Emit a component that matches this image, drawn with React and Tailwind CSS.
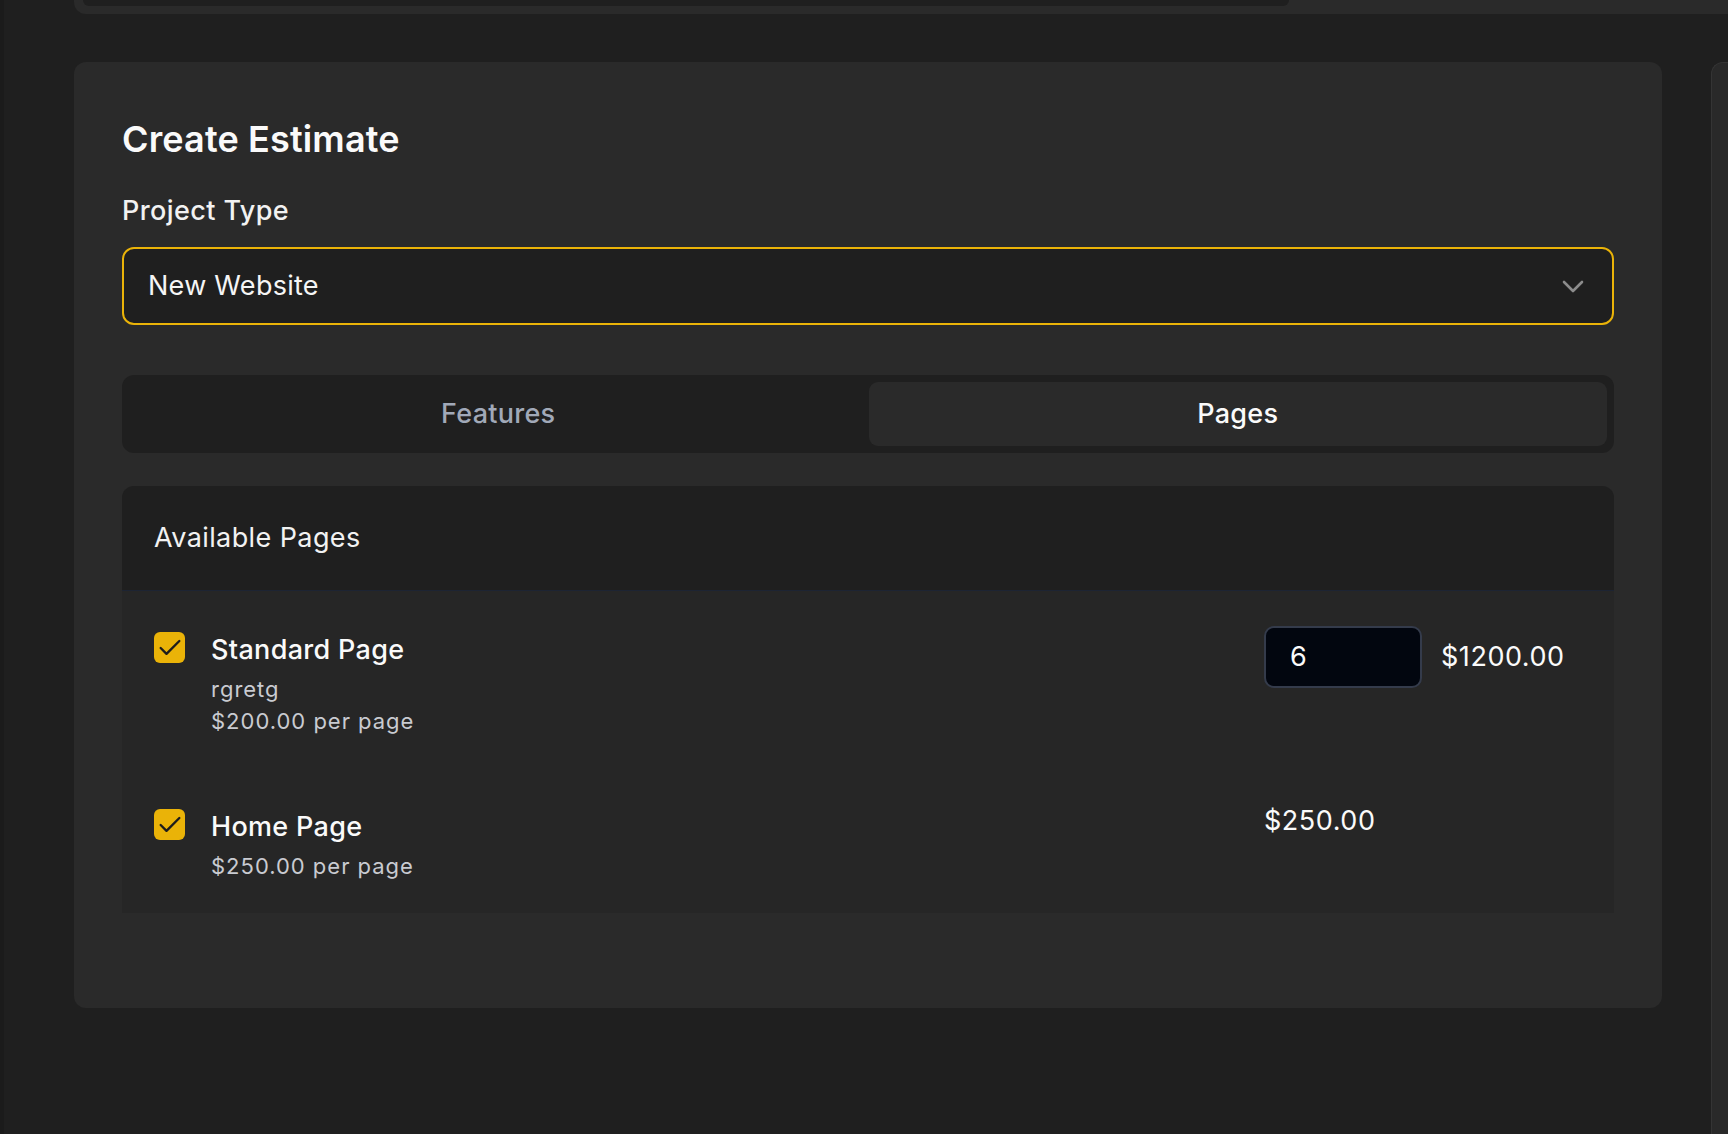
import React from "react";

function Check() {
  return (
    <svg width="28" height="28" viewBox="0 0 24 24" fill="none" stroke="#1c1c1c" strokeWidth="2" strokeLinecap="round" strokeLinejoin="round">
      <path d="M20 6 9 17l-5-5" />
    </svg>
  );
}

function Checkbox() {
  return (
    <div className="w-[31px] h-[31px] shrink-0 rounded-[6px] bg-[#eab308] flex items-center justify-center">
      <Check />
    </div>
  );
}

function Row({ title, lines, right }) {
  return (
    <div className="flex items-start justify-between pl-[32px] pt-[35px] pb-[31px]">
      <div className="flex items-start gap-[26px] mt-[6px]">
        <Checkbox />
        <div className="flex flex-col">
          <div className="text-[27px] leading-[36px] font-medium tracking-[0.012em] text-[#fafafa] mb-[5px]">{title}</div>
          {lines.map((l) => (
            <div key={l} className="text-[22px] leading-[32px] tracking-[0.045em] text-[#c9cbd1]">{l}</div>
          ))}
        </div>
      </div>
      <div className="w-[318px] mr-[32px] flex items-center gap-[19px]">{right}</div>
    </div>
  );
}

export default function App() {
  return (
    <div className="w-[1728px] h-[1134px] overflow-hidden bg-[#1f1f1f] flex" style={{ fontFamily: "Inter, 'Noto Sans', sans-serif" }}>
      <div className="w-[4px] h-full shrink-0 bg-[#1b1b1b]" />
      <div className="flex-1 flex flex-col pl-[70px]">
        <div className="h-[14px] shrink-0 bg-[#2a2a2a] rounded-bl-xl">
          <div className="ml-[9px] w-[1206px] h-[6px] bg-[#1f1f1f] rounded-b-lg" />
        </div>
        <div className="mt-[48px] flex items-start">
          <div className="w-[1588px] shrink-0 bg-[#2a2a2a] rounded-xl px-[48px] pt-[53px] pb-[95px]">
            <h1 className="text-[36px] leading-[48px] font-semibold text-[#fafafa] tracking-[0.004em]">Create Estimate</h1>
            <div className="mt-[28px] text-[27px] leading-[40px] font-medium tracking-[0.015em] text-[#f2f2f2]">Project Type</div>
            <div className="mt-[16px] h-[78px] rounded-[12px] border-2 border-[#eab308] bg-[#1f1f1f] flex items-center justify-between pl-[24px] pr-[28px]">
              <span className="text-[27px] leading-[36px] tracking-[0.01em] text-[#f5f5f5]">New Website</span>
              <svg width="22" height="13" viewBox="0 0 22 13" fill="none" stroke="#8c8c8c" strokeWidth="2.6" strokeLinecap="round" strokeLinejoin="round">
                <polyline points="2,2 11,11 20,2" />
              </svg>
            </div>
            <div className="mt-[50px] h-[78px] rounded-[12px] bg-[#1f1f1f] p-[7px] grid grid-cols-2 gap-[1px]">
              <div className="flex items-center justify-center text-[27px] font-medium tracking-[0.01em] text-[#a1a9b8]">Features</div>
              <div className="flex items-center justify-center rounded-[9px] bg-[#2a2a2a] text-[27px] font-medium tracking-[0.01em] text-[#fafafa]">Pages</div>
            </div>
            <div className="mt-[33px] rounded-t-xl overflow-hidden bg-[#262626]">
              <div className="h-[105px] bg-[#1f1f1f] border-b border-[#1d2433] flex items-center pl-[32px]">
                <span className="text-[27px] leading-[36px] tracking-[0.015em] text-[#f2f2f2]">Available Pages</span>
              </div>
              <Row
                title="Standard Page"
                lines={["rgretg", "$200.00 per page"]}
                right={
                  <>
                    <div className="w-[158px] h-[62px] rounded-[10px] border-2 border-[#343b4b] bg-[#02060f] flex items-center pl-[24px] text-[27px] text-[#fafafa]">6</div>
                    <span className="text-[27px] leading-[36px] tracking-[0.02em] text-[#fafafa]">$1200.00</span>
                  </>
                }
              />
              <Row
                title="Home Page"
                lines={["$250.00 per page"]}
                right={<span className="text-[27px] leading-[36px] tracking-[0.02em] text-[#fafafa]">$250.00</span>}
              />
            </div>
          </div>
          <div className="ml-[49px] flex-1 h-[1072px] bg-[#292929] border-l border-t border-[#343434] rounded-tl-xl" />
        </div>
      </div>
    </div>
  );
}
